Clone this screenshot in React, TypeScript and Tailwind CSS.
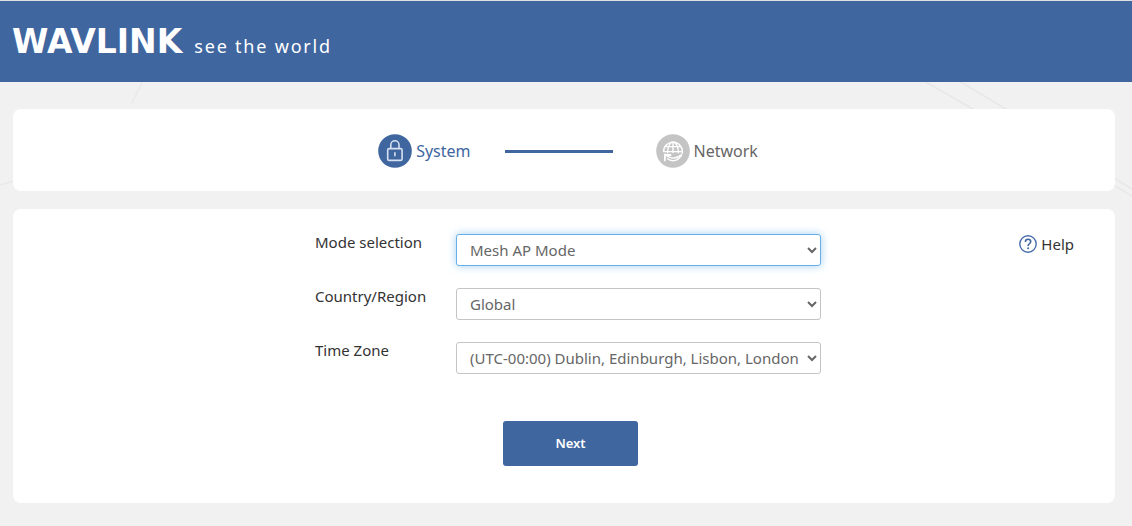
import React, { useState } from "react";

const fields = [
  {
    name: "mode",
    label: "Mode selection",
    options: ["Mesh AP Mode"],
  },
  {
    name: "region",
    label: "Country/Region",
    options: ["Global"],
  },
  {
    name: "timezone",
    label: "Time Zone",
    options: ["(UTC-00:00) Dublin, Edinburgh, Lisbon, London"],
  },
];

function LockIcon() {
  return (
    <svg width="34" height="34" viewBox="0 0 34 34" fill="none" aria-hidden="true">
      <circle cx="17" cy="17" r="16.8" fill="#4066a0" />
      <g stroke="#d5e0f0" strokeWidth="1.6" strokeLinecap="round">
        <rect x="9.7" y="14.6" width="14.4" height="11.8" rx="1.5" />
        <path d="M12.8 14.3v-3.4a4.1 4.1 0 0 1 8.2 0v3.4" />
        <path d="M16.9 18.8v3" />
      </g>
    </svg>
  );
}

function GlobeIcon() {
  return (
    <svg width="34" height="34" viewBox="0 0 34 34" fill="none" aria-hidden="true">
      <circle cx="17" cy="17" r="16.8" fill="#c4c4c4" />
      <g stroke="#ffffff" strokeWidth="1.4" strokeLinecap="round">
        <path d="M7.6 17.5a9.4 9.4 0 1 1 18.6 2" />
        <path d="M17 8v10.5M8 17.6h18.2M9.7 12.6h14.8" />
        <path d="M15.6 8.2c-2.8 2.4-4 6-3.9 10.4M18.4 8.2c2.8 2.4 4.1 6 3.9 10.4" />
        <path d="M10.6 21.8c4.4 3.4 10.4 3 15-1.2-2.6 5.8-9 8-14.2 4.2" />
        <path d="M8.8 26.4l.2-5.6 5.6.2" strokeWidth="1.8" />
      </g>
    </svg>
  );
}

function HelpIcon() {
  return (
    <svg width="18" height="18" viewBox="0 0 18 18" fill="none" aria-hidden="true">
      <circle cx="9" cy="9" r="8.2" stroke="#4a70ad" strokeWidth="1.4" />
      <path
        d="M6.4 6.9c0-1.6 1.1-2.6 2.7-2.6s2.6 1 2.6 2.4c0 2-2.6 2.1-2.6 4.2"
        stroke="#4066a0"
        strokeWidth="1.6"
      />
      <circle cx="9.1" cy="13.3" r="1" fill="#4066a0" />
    </svg>
  );
}

export default function App() {
  const [values, setValues] = useState<Record<string, string>>({
    mode: fields[0].options[0],
    region: fields[1].options[0],
    timezone: fields[2].options[0],
  });

  const handleChange = (e: React.ChangeEvent<HTMLSelectElement>) => {
    setValues({ ...values, [e.target.name]: e.target.value });
  };

  return (
    <div className="relative min-h-screen bg-[#f1f1f1] font-['Noto_Sans',sans-serif] text-[#333333]">
      {/* Faint background lines */}
      <svg
        className="absolute right-0 top-20 h-32 w-60"
        viewBox="0 0 240 128"
        fill="none"
        stroke="#e8e8e8"
        strokeWidth="1.5"
        aria-hidden="true"
      >
        <path d="M32 1l54 31M67 1l52 31M220 104l20 12M222 98l18 11" />
      </svg>
      <svg
        className="absolute left-0 top-20 h-32 w-40"
        viewBox="0 0 160 128"
        fill="none"
        stroke="#e9e9e9"
        strokeWidth="1.5"
        aria-hidden="true"
      >
        <path d="M143 1l-11 22M0 105l14-4" />
      </svg>

      {/* Header */}
      <header className="relative flex h-[82px] items-center border-t border-[#dde0e0] bg-[#4066a0] px-3 text-white">
        <div className="flex items-baseline gap-3">
          <span className="font-['DejaVu_Sans',sans-serif] text-[33px] font-bold leading-10">
            WAVLINK
          </span>
          <span className="text-lg tracking-widest">see the world</span>
        </div>
      </header>

      <main className="relative flex flex-col gap-[18px] pb-6 pl-[13px] pr-[17px] pt-[27px]">
        {/* Steps */}
        <section className="flex h-[82px] items-center justify-center rounded-lg bg-white pl-2 pt-[2px]">
          <div className="flex items-center gap-1 text-[#4066a0]">
            <LockIcon />
            <span>System</span>
          </div>
          <div className="ml-[34px] mr-[43px] h-[3px] w-[108px] bg-[#4066a0]"></div>
          <div className="flex items-center gap-1 text-[#666666]">
            <GlobeIcon />
            <span>Network</span>
          </div>
        </section>

        {/* Settings form */}
        <section className="grid grid-cols-[1fr_506px_1fr] rounded-lg bg-white pb-[37px] pl-2 pt-[25px]">
          <form className="col-start-2" onSubmit={(e) => e.preventDefault()}>
            <div className="flex flex-col gap-[22px]">
              {fields.map((field) => (
                <div key={field.name} className="flex items-start">
                  <label
                    htmlFor={field.name}
                    className="w-[141px] text-[15px] leading-4"
                  >
                    {field.label}
                  </label>
                  <select
                    id={field.name}
                    name={field.name}
                    value={values[field.name]}
                    onChange={handleChange}
                    autoFocus={field.name === "mode"}
                    className="h-8 min-w-0 flex-1 rounded-[3px] border border-[#c4c4c4] bg-white pl-[9px] text-[15px] text-[#666666] outline-none focus:border-[#66afe9] focus:shadow-[0_0_8px_rgba(102,175,233,0.6)]"
                  >
                    {field.options.map((option) => (
                      <option key={option}>{option}</option>
                    ))}
                  </select>
                </div>
              ))}
            </div>
            <div className="flex justify-center pl-[5px] pt-[47px]">
              <button
                type="submit"
                className="h-[45px] w-[135px] rounded-[3px] bg-[#4066a0] text-[13px] font-semibold text-white"
              >
                Next
              </button>
            </div>
          </form>
          <a
            href="#help"
            className="flex items-center gap-1 self-start justify-self-end pr-[41px] text-[15px] leading-5"
          >
            <HelpIcon />
            Help
          </a>
        </section>
      </main>
    </div>
  );
}
